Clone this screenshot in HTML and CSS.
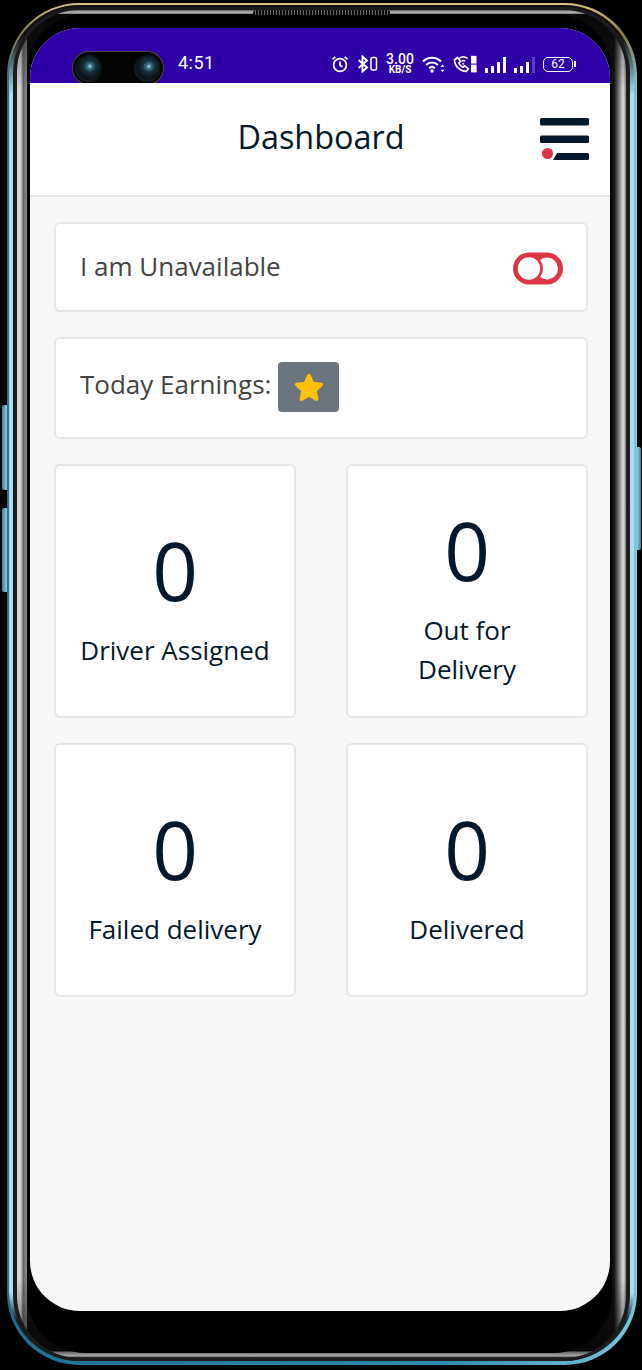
FILE: index.html
```html
<!DOCTYPE html>
<html lang="en">
<head>
    <meta charset="UTF-8">
    <meta name="viewport" content="width=device-width, initial-scale=1.0">
    <title>Dashboard</title>
    <link rel="stylesheet" href="styles.css">
</head>
<body>
    <div class="phone">
        <span class="side-key key-one"></span>
        <span class="side-key key-two"></span>
        <span class="side-key key-power"></span>
        <span class="speaker"></span>
        <div class="phone-rim">
            <div class="phone-band">
                <div class="phone-chrome">
                    <div class="phone-glass">
                        <div class="screen">
                            <!-- Status bar -->
                            <div class="status-bar">
                                <div class="camera">
                                    <span class="lens"></span>
                                    <span class="lens"></span>
                                </div>
                                <span class="clock">4:51</span>
                                <div class="status-icons">
                                    <svg width="18" height="18" viewBox="0 0 18 18" fill="none" stroke="#fff" stroke-width="1.8"><circle cx="9" cy="10" r="6.4"/><path d="M9 6.500v3.900l2.500 1.400M1.500 4.400L4.200 1.800M16.500 4.400L13.800 1.800"/></svg>
                                    <svg width="21" height="18" viewBox="0 0 21 18" fill="none" stroke="#fff" stroke-width="1.9"><path d="M1.500 5l8.500 7.500-4.500 4V1.500l4.500 4L1.500 13"/><rect x="14" y="2.500" width="5.500" height="12.500" rx="1.500" stroke-width="1.500"/></svg>
                                    <div class="speed"><span class="speed-num">3.00</span><span class="speed-unit">KB/S</span></div>
                                    <svg width="23" height="18" viewBox="0 0 23 18" fill="none" stroke="#fff" stroke-width="2.100"><path d="M1 6.500c5-5 13-5 18 0M4 10c3.500-3.300 8.500-3.300 12 0M7 13.200c1.800-1.600 4.200-1.600 6 0"/><circle cx="10" cy="16" r="1.700" fill="#fff" stroke="none"/><path d="M20.500 9.500l-2 2.200h4zM20.500 17l-2-2.200h4z" fill="#fff" stroke="none"/></svg>
                                    <svg width="24" height="18" viewBox="0 0 24 18" fill="none" stroke="#fff" stroke-width="1.700"><path d="M1.500 5l3-2.500 3 4-1.700 1.500c.8 2 2.200 3.300 4.200 4.300l1.700-1.500 3.600 3-2 2.500C7 16 1.500 11 1.500 5z"/><path d="M6 3.500c2.600-2.200 6-2.200 8.600 0M8.500 6.200c1.200-.9 2.400-.9 3.600 0" stroke-width="1.400"/><circle cx="10.300" cy="8.800" r="1" fill="#fff" stroke="none"/><rect x="18" y=".8" width="5.500" height="7.800" fill="#fff" stroke="none"/><rect x="18" y="9.600" width="5.500" height="7.800" fill="#fff" stroke="none"/><text x="20.700" y="7.300" class="sim-num">1</text><text x="20.700" y="16.100" class="sim-num">2</text></svg>
                                    <svg width="21" height="17" viewBox="0 0 21 17" fill="#fff"><rect x="0" y="12" width="3" height="5"/><rect x="6" y="10" width="3" height="7"/><rect x="12" y="6" width="3" height="11"/><rect x="18" y="1" width="3" height="16"/></svg>
                                    <svg width="21" height="17" viewBox="0 0 21 17" fill="#fff"><rect x="0" y="12" width="3" height="5"/><rect x="6" y="10" width="3" height="7"/><rect x="12" y="6" width="3" height="11"/><rect x="18" y="1" width="3" height="16" fill="#5b3cc4"/></svg>
                                    <div class="battery"><span class="battery-level">62</span></div>
                                </div>
                            </div>

                            <!-- Header -->
                            <header class="top-bar">
                                <h1>Dashboard</h1>
                                <svg class="menu-icon" width="50" height="44" viewBox="0 0 50 44">
                                    <rect x="0" y="0" width="49" height="7.500" rx="1.500" fill="#04182b"/>
                                    <rect x="0" y="17.500" width="49" height="7.500" rx="1.500" fill="#04182b"/>
                                    <path d="M17 35h30.500a1.500 1.500 0 0 1 1.500 1.500v4a1.500 1.500 0 0 1-1.500 1.500H13z" fill="#04182b"/>
                                    <circle cx="7.500" cy="35.500" r="5.500" fill="#dc3545"/>
                                </svg>
                            </header>

                            <main class="content">
                                <div class="card card-availability">
                                    <span class="card-text">I am Unavailable</span>
                                    <svg class="toggle-icon" width="50" height="33" viewBox="0 0 50 32"><path fill-rule="evenodd" fill="#dc3545" d="M16 0h18a16 16 0 0 1 0 32H16a16 16 0 0 1 0-32zM16 4.800a11.200 11.200 0 1 0 0 22.400 11.200 11.200 0 0 0 0-22.400zM27.100 7.450a14 14 0 0 1 0 17.100 11 11 0 1 0 0-17.100z"/></svg>
                                </div>
                                <div class="card card-earnings">
                                    <span class="card-text">Today Earnings:</span>
                                    <span class="star-badge">
                                        <svg width="32" height="30" viewBox="0 0 32 30"><path fill="#ffc107" stroke="#ffc107" stroke-width="3.500" stroke-linejoin="round" d="M16 3.500l3.700 7.900 8.700 1.100-6.400 6 1.700 8.600L16 22.900l-7.700 4.200 1.700-8.600-6.400-6 8.700-1.100z"/></svg>
                                    </span>
                                </div>
                                <div class="stat-grid">
                                    <div class="stat-tile">
                                        <div class="stat-num">0</div>
                                        <div class="stat-label">Driver Assigned</div>
                                    </div>
                                    <div class="stat-tile">
                                        <div class="stat-num">0</div>
                                        <div class="stat-label">Out for<br>Delivery</div>
                                    </div>
                                    <div class="stat-tile">
                                        <div class="stat-num">0</div>
                                        <div class="stat-label">Failed delivery</div>
                                    </div>
                                    <div class="stat-tile">
                                        <div class="stat-num">0</div>
                                        <div class="stat-label">Delivered</div>
                                    </div>
                                </div>
                            </main>
                        </div>
                    </div>
                </div>
            </div>
        </div>
    </div>
</body>
</html>
```

FILE: styles.css
```css
body {
    margin: 0;
    background-color: #000;
    font-family: "Open Sans", sans-serif;
    overflow: hidden;
}

/* Phone frame: nested rings */
.phone {
    position: relative;
    margin: 3px 5px 5px 7px;
    height: 1356px;
    padding: 2px 3px 4px 2px;
    border-radius: 72px;
    background:
        linear-gradient(#d9c384 0, #8a7a4e 30px, rgba(138, 122, 78, 0) 90px),
        linear-gradient(90deg, #1f6f92 0, #2f8ab0 70%, #7cc6dc 100%);
}

.phone-rim {
    height: 1356px;
    padding: 2px 4px 0 4px;
    box-sizing: border-box;
    border-radius: 70px;
    background: linear-gradient(#111 0, #111 30px, #a8def0 90px, #a8def0 95%, #0d2630 97%);
}

.phone-band {
    height: 100%;
    padding: 3px 4px;
    box-sizing: border-box;
    border-radius: 66px;
    background-color: #1c1c1c;
}

.phone-chrome {
    height: 100%;
    padding: 4px 14px 5px 10px;
    box-sizing: border-box;
    border-radius: 62px;
    background:
        linear-gradient(#555 0, #bbb 2px, #777 4px, rgba(0, 0, 0, 0) 4px),
        linear-gradient(rgba(0, 0, 0, .55) 0, rgba(0, 0, 0, 0) 80px),
        linear-gradient(0deg, #000 0, #aaa 2px, #666 6px, rgba(0, 0, 0, 0) 7px),
        linear-gradient(0deg, rgba(0, 0, 0, .6) 0, rgba(0, 0, 0, 0) 80px),
        linear-gradient(90deg, #d8d8d8 0, #d0d0d0 4px, #666 6px, #8a8a8a 10px, #111 10px, #111 calc(100% - 12px), #777 calc(100% - 7px), #ddd calc(100% - 3px), #888 100%);
}

.phone-glass {
    height: 100%;
    padding: 14px 2px 42px 3px;
    box-sizing: border-box;
    border-radius: 58px;
    background-color: #000;
}

.screen {
    height: 100%;
    border-radius: 50px;
    overflow: hidden;
    background-color: #f7f7f7;
}

.side-key {
    position: absolute;
    left: -5px;
    width: 5px;
    background: linear-gradient(90deg, #3f7f99, #8fcbe0);
    border-radius: 2px 0 0 2px;
}

.key-one {
    top: 402px;
    height: 85px;
}

.key-two {
    top: 505px;
    height: 84px;
}

.key-power {
    left: auto;
    right: -4px;
    top: 444px;
    width: 4px;
    height: 103px;
    background: linear-gradient(90deg, #8fcbe0, #3f7f99);
    border-radius: 0 2px 2px 0;
}

.speaker {
    position: absolute;
    left: 246px;
    top: 7px;
    z-index: 1;
    width: 137px;
    height: 5px;
    border-radius: 3px;
    background: repeating-linear-gradient(90deg, #0a0a0a 0, #0a0a0a 2px, #666 2px, #666 3px);
}

/* Status bar */
.status-bar {
    display: flex;
    align-items: flex-start;
    height: 55px;
    padding-left: 43px;
    background-color: #2f00a8;
    color: #fff;
}

.camera {
    display: flex;
    justify-content: space-between;
    align-items: center;
    box-sizing: border-box;
    width: 90px;
    height: 32px;
    margin-top: 24px;
    padding: 0 2px;
    border-radius: 16px;
    background-color: #040404;
    box-shadow: 0 0 0 1px #4d4730;
    position: relative;
}

.lens {
    width: 27px;
    height: 27px;
    border-radius: 50%;
    background: radial-gradient(circle at 55% 42%, #b5e2ea 0, #3e7c90 10%, #16303c 28%, #0a1216 55%, #262b2e 88%, #111 100%);
}

.clock {
    margin: 24px 0 0 15px;
    font-family: Roboto, sans-serif;
    font-size: 18px;
    line-height: 22px;
    letter-spacing: .5px;
}

.status-icons {
    display: flex;
    align-items: center;
    gap: 8px;
    margin: 25px 0 0 auto;
    padding-right: 37px;
    height: 22px;
}

.sim-num {
    font-family: Roboto, sans-serif;
    font-size: 7px;
    font-weight: 700;
    fill: #2f00a8;
    text-anchor: middle;
}

.speed {
    display: flex;
    flex-direction: column;
    align-items: center;
    width: 28px;
    font-family: Roboto, sans-serif;
    font-weight: 500;
    color: #fff;
}

.speed-num {
    font-size: 14px;
    line-height: 11px;
}

.speed-unit {
    font-size: 10px;
    font-weight: 700;
    line-height: 9px;
}

.battery {
    position: relative;
    box-sizing: border-box;
    width: 30px;
    height: 15px;
    border: 1.500px solid #fff;
    border-radius: 5px;
    text-align: center;
}

.battery::after {
    content: "";
    position: absolute;
    right: -4px;
    top: 3px;
    width: 2px;
    height: 6px;
    background-color: #fff;
}

.battery-level {
    display: block;
    font-family: Roboto, sans-serif;
    font-size: 12px;
    line-height: 12px;
}

/* Header */
.top-bar {
    position: relative;
    display: flex;
    justify-content: center;
    align-items: center;
    box-sizing: border-box;
    height: 114px;
    padding: 0 0 6px 2px;
    background-color: #fff;
    border-bottom: 2px solid #e5e5e5;
}

.top-bar h1 {
    margin: 0;
    font-size: 32.400px;
    font-weight: 400;
    color: #04182b;
}

.menu-icon {
    position: absolute;
    right: 20px;
    top: 35px;
}

/* Cards */
.content {
    display: flex;
    flex-direction: column;
    gap: 25px;
    padding: 25px 22px 0 24px;
}

.card {
    display: flex;
    align-items: center;
    box-sizing: border-box;
    padding: 0 23px 0 24px;
    background-color: #fff;
    border: 2px solid #e6e6e6;
    border-radius: 6px;
}

.card-availability {
    justify-content: space-between;
    height: 90px;
}

.card-availability .card-text {
    margin-bottom: 2px;
}

.toggle-icon {
    margin-top: 2px;
}

.card-earnings {
    gap: 7px;
    height: 102px;
}

.card-earnings .card-text {
    margin-bottom: 8px;
}

.card-text {
    font-size: 26px;
    color: #444;
}

.star-badge {
    display: flex;
    justify-content: center;
    align-items: center;
    width: 61px;
    height: 50px;
    margin-bottom: 2px;
    border-radius: 4px;
    background-color: #6c757d;
}

.stat-grid {
    display: grid;
    grid-template-columns: 1fr 1fr;
    gap: 25px 50px;
}

.stat-tile {
    display: flex;
    flex-direction: column;
    justify-content: center;
    align-items: center;
    box-sizing: border-box;
    height: 254px;
    padding-top: 9px;
    background-color: #fff;
    border: 2px solid #e6e6e6;
    border-radius: 6px;
    color: #04182b;
    text-align: center;
}

.stat-num {
    font-size: 80px;
    line-height: 96px;
    margin-bottom: 13px;
}

.stat-label {
    font-size: 26px;
    line-height: 39px;
}
```
